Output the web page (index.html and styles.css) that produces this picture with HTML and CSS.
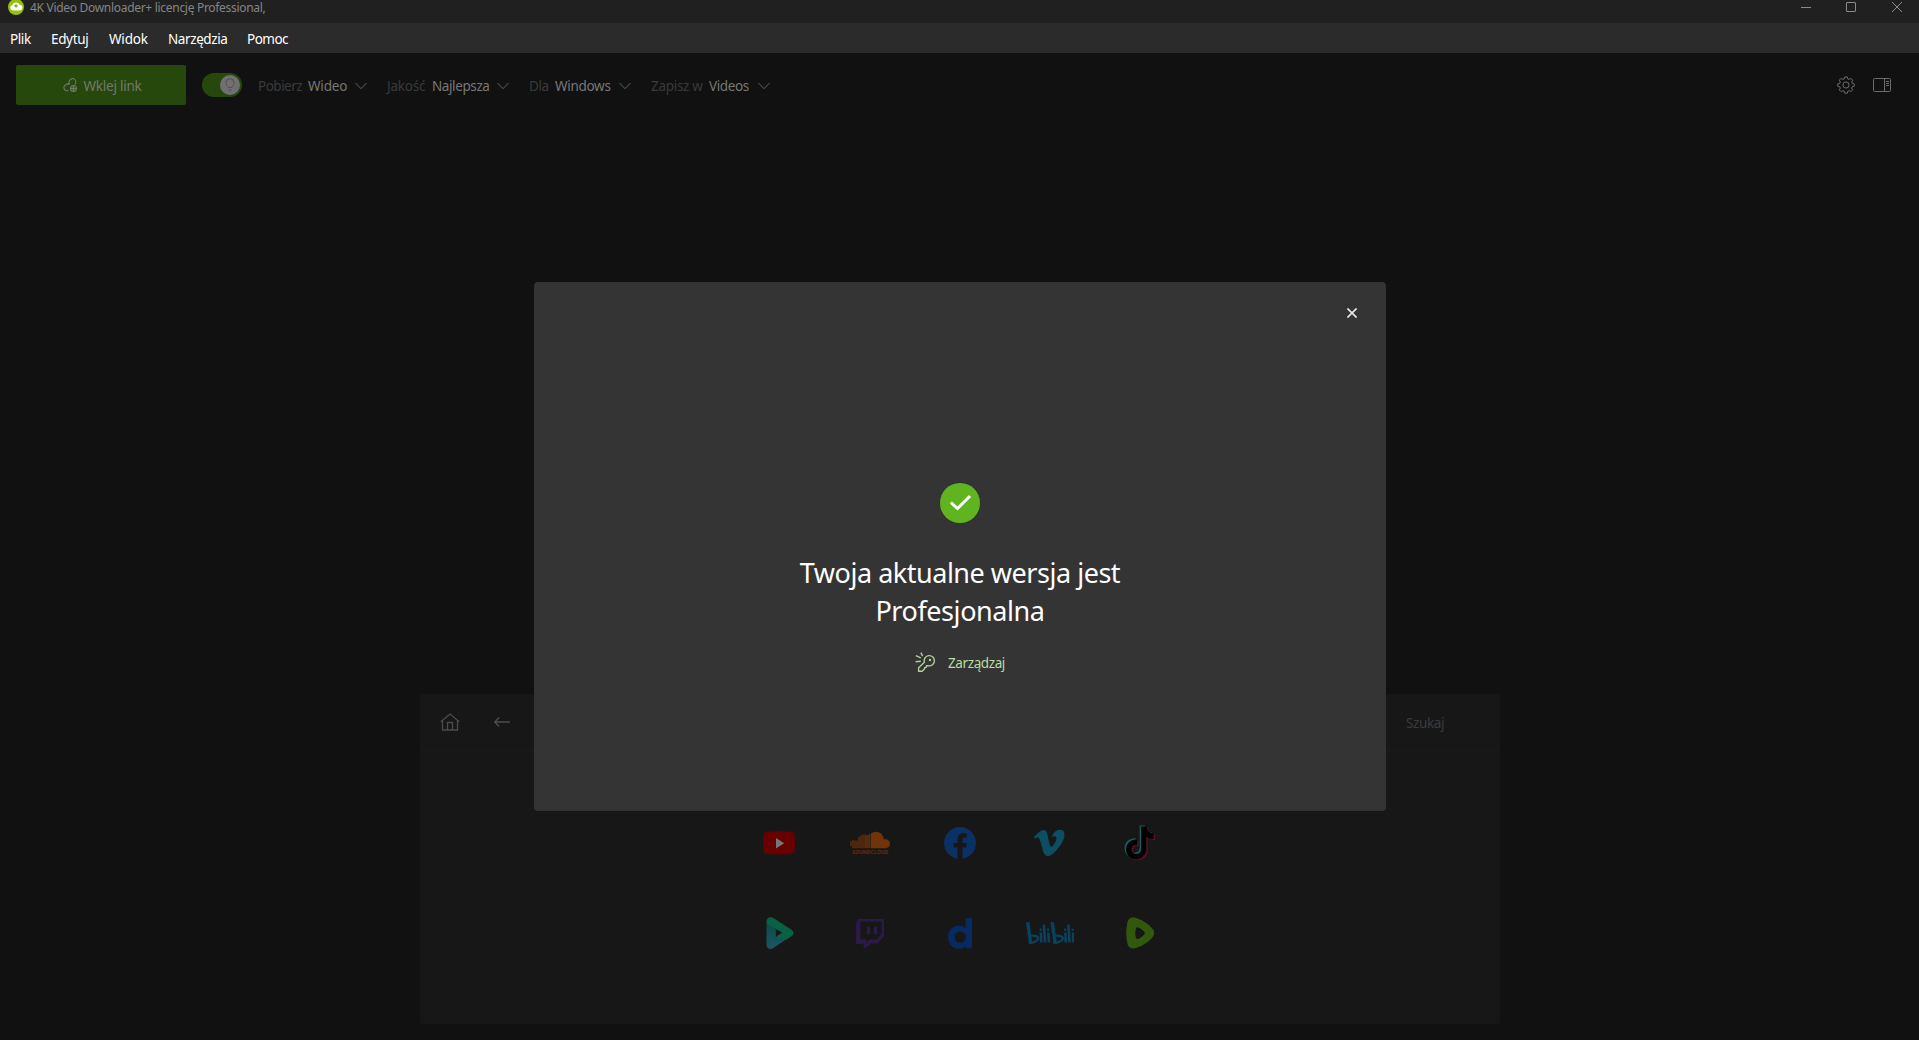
FILE: index.html
```html
<!DOCTYPE html>
<html lang="pl">
<head>
  <meta charset="UTF-8" />
  <meta name="viewport" content="width=device-width, initial-scale=1.0" />
  <title>4K Video Downloader+</title>
  <link rel="stylesheet" href="styles.css">
</head>
<body>
  <header class="titlebar">
    <svg class="app-logo" width="16" height="16" viewBox="0 0 16 16">
      <circle cx="8" cy="8" r="8" fill="#96bf0d"/>
      <path d="M4.800 11.600a2.800 2.800 0 0 1-.5-5.500 3.900 3.900 0 0 1 7.300-.3 2.900 2.900 0 0 1-.3 5.800z" fill="#fff"/>
      <path d="M8 5.200v3.400M6.300 6.900h3.400" stroke="#70a000" stroke-width="1.200"/>
    </svg>
    <span class="app-title">4K Video Downloader+ licencję Professional,</span>
    <div class="window-controls">
      <svg width="12" height="12" viewBox="0 0 12 12"><path d="M1 6.500h10"/></svg>
      <svg width="12" height="12" viewBox="0 0 12 12"><rect x="1.500" y="1.500" width="9" height="9" rx="0.500"/></svg>
      <svg width="12" height="12" viewBox="0 0 12 12"><path d="M1 1l10 10M11 1L1 11"/></svg>
    </div>
  </header>

  <nav class="menubar">
    <span class="menu-file">Plik</span>
    <span class="menu-edit">Edytuj</span>
    <span class="menu-view">Widok</span>
    <span class="menu-tools">Narzędzia</span>
    <span class="menu-help">Pomoc</span>
  </nav>

  <div class="toolbar">
    <button class="paste-btn">
      <svg width="15" height="15" viewBox="0 0 16 16" fill="none" stroke="#727a6b" stroke-width="1.100">
        <path d="M6 13.500H4a3.200 3.200 0 0 1-1.700-5.800l2-1.300a3 3 0 0 1 3.200.2"/>
        <path d="M5.400 7.600L6.800 3a3.600 3.600 0 0 1 5.900-1.400 3.600 3.600 0 0 1 .7 3.800l-.7 1.500"/>
        <circle cx="11.200" cy="11.200" r="3.200"/>
        <path d="M11.200 8.500v5.400M8.500 11.200h5.400" stroke-width="1.500"/>
      </svg>
      <span>Wklej link</span>
    </button>
    <div class="switch">
      <div class="knob">
        <svg width="12" height="14" viewBox="0 0 12 14" fill="none" stroke="#525252" stroke-width="1">
          <path d="M4.200 9.500C4 8 2 7.400 2 4.700a4 4 0 0 1 8 0C10 7.400 8 8 7.800 9.500zM4.300 12h3.400"/>
        </svg>
      </div>
    </div>
    <div class="option opt-type">
      <span class="label">Pobierz</span><span class="value">Wideo</span>
      <svg class="chevron" width="12" height="8" viewBox="0 0 12 8"><path d="M.5 1L6 6.700 11.500 1"/></svg>
    </div>
    <div class="option opt-quality">
      <span class="label">Jakość</span><span class="value">Najlepsza</span>
      <svg class="chevron" width="12" height="8" viewBox="0 0 12 8"><path d="M.5 1L6 6.700 11.500 1"/></svg>
    </div>
    <div class="option opt-system">
      <span class="label">Dla</span><span class="value">Windows</span>
      <svg class="chevron" width="12" height="8" viewBox="0 0 12 8"><path d="M.5 1L6 6.700 11.500 1"/></svg>
    </div>
    <div class="option opt-folder">
      <span class="label">Zapisz w</span><span class="value">Videos</span>
      <svg class="chevron" width="12" height="8" viewBox="0 0 12 8"><path d="M.5 1L6 6.700 11.500 1"/></svg>
    </div>
    <div class="tools">
      <svg width="18" height="18" viewBox="0 0 18 18">
        <path d="M7.700 .9h2.600l.5 2 1.300.5 1.800-1 1.800 1.800-1 1.800.5 1.300 2 .5v2.500l-2 .5-.5 1.300 1 1.800-1.800 1.800-1.800-1-1.300.5-.5 2H7.700l-.5-2-1.300-.5-1.800 1-1.800-1.800 1-1.800-.5-1.300-2-.5V7.800l2-.5.5-1.300-1-1.800 1.800-1.800 1.800 1 1.300-.5z" stroke-linejoin="round"/>
        <circle cx="9" cy="9" r="3.100"/>
      </svg>
      <svg width="18" height="14" viewBox="0 0 18 14">
        <rect x=".5" y=".5" width="17" height="13" rx="1"/>
        <path d="M11.500 .5v13M13 3.500h3M13 5.500h3M13 7.500h3"/>
      </svg>
    </div>
  </div>

  <main class="content">
    <section class="browser">
      <div class="browser-bar">
        <svg width="20" height="18" viewBox="0 0 20 18">
          <path d="M.8 8.700L10 1l9.200 7.700M2.500 7.500V17h15V7.500M7.500 17V9.500h5V17"/>
        </svg>
        <svg class="back" width="16" height="10" viewBox="0 0 16 10"><path d="M16 5H.8M5.200 .5L.7 5l4.500 4.500"/></svg>
        <span class="search">Szukaj</span>
      </div>
      <div class="sites">
        <!-- YouTube -->
        <div class="site site-youtube"><svg width="32" height="24" viewBox="0 0 32 24">
          <path d="M4 .8Q16-.1 28 .8 31.300 1 31.600 4.500q.7 7.500 0 15-.3 3.200-3.600 3.600-12 .8-24 0-3.200-.3-3.600-3.600-.7-7.500 0-15Q.8 1.200 4 .8z" fill="#690000"/>
          <path d="M13 7v10.400l8.200-5.200z" fill="#777"/>
        </svg></div>
        <!-- SoundCloud -->
        <div class="site"><svg width="40" height="24" viewBox="0 0 40 24">
          <path d="M21 17.200V2.300Q23 .7 26 .7c4 0 7.400 3 7.800 7.800 3-1 6.200 1 6.200 4.300 0 2.600-2 4.400-4.500 4.400z" fill="#713409"/>
          <path d="M1 10.500v4.500M3 9v8M5 9.500v7.700M7 9.500v7.700M9 6v11.200M11 4.500v12.700M13 3.500v13.700M15 3.600v13.600M17 4.500v12.700M19.200 3v14.200" stroke="#69300a" stroke-width="1.300"/>
          <path d="M15 4h6v13h-6z" fill="#713409" opacity=".35"/>
          <text x="2.200" y="23" class="sc-label" textLength="36" lengthAdjust="spacingAndGlyphs">SOUNDCLOUD</text>
        </svg></div>
        <!-- Facebook -->
        <div class="site"><svg width="32" height="32" viewBox="0 0 32 32">
          <circle cx="16" cy="16" r="16" fill="#0b3064"/>
          <path d="M13.500 32V20.500h-4V16h4v-3.500c0-4 2.400-6.300 6-6.300 1.800 0 3.400.3 3.400.3v3.900h-2c-2 0-2.400 1.200-2.400 2.500V16h4.300l-.7 4.500h-3.600V32z" fill="#171717"/>
        </svg></div>
        <!-- Vimeo -->
        <div class="site site-vimeo"><svg width="32" height="28" viewBox="0 0 32 28">
          <path d="M31.400 6.900c-.2 3-2.300 7.200-6.300 12.300-4.100 5.300-7.600 8-10.500 8-1.800 0-3.300-1.600-4.500-4.900L7.600 13.200C6.700 10 5.800 8.300 4.800 8.300c-.3 0-1 .5-2.500 1.500L.8 7.900l4.600-4.100C7.500 2 9 1.100 10.100 1c2.500-.2 4 1.400 4.500 5 .7 3.800 1.100 6.200 1.400 7.100.7 3.200 1.500 4.700 2.300 4.700.7 0 1.700-1 3-3.100 1.300-2 2-3.600 2.100-4.700.2-1.800-.5-2.700-2.100-2.700-.8 0-1.500.2-2.300.5C20.500 3 23.400.6 27.600.7c2.700.1 4 2.100 3.800 6.200z" fill="#0d4e62"/>
        </svg></div>
        <!-- TikTok, three shifted layers -->
        <div class="site"><svg width="32" height="36" viewBox="0 0 32 36">
          <defs><path id="note" d="M16.500 1h5.300c.6 4 3 6.700 7.200 7.200v5.300c-2.800 0-5-.8-7.200-2.300v12c0 6-4.400 10.500-10 10.500S1.500 29.500 1.500 24c0-6 4.500-10.300 11-10.100v5.500c-3.400-.4-5.600 1.600-5.600 4.400 0 2.700 2 4.600 4.700 4.600 3 0 4.900-2 4.900-5.200z"/></defs>
          <use href="#note" x="-.9" y="-.6" fill="#10605e"/>
          <use href="#note" x="2" y="1.600" fill="#660b28"/>
          <use href="#note" x=".6" y=".6" fill="#000"/>
        </svg></div>
        <!-- Play -->
        <div class="site"><svg width="28" height="32" viewBox="0 0 28 32">
          <defs><linearGradient id="teal" x1="0" y1="0" x2="0" y2="1"><stop offset="0" stop-color="#0a4a4c"/><stop offset="1" stop-color="#1c5661"/></linearGradient></defs>
          <path d="M.5 4v24c0 3.300 3.500 5 6.500 3.200L20 22.500l-6-4.500-4.200 2.500v-8.300z" fill="url(#teal)"/>
          <path d="M.5 4.500C.5.800 4-1 7.500 1l17.700 11.500c3 1.900 3 5 0 7l-5.700 3.800-9.300-3.700 6-4L2.500 8Q.5 6.500.5 4.500z" fill="#076142"/>
        </svg></div>
        <!-- Twitch -->
        <div class="site"><svg width="28" height="29" viewBox="0 0 28 29">
          <path fill-rule="evenodd" d="M2 0h26v17.500l-7 7h-6.500L10.500 28.800H7.500V25H0V5zM4.500 2.500v17.800h5.800v3.200l3.300-3.200h6.900l5-5V2.500z" fill="#2b1948"/>
          <path d="M11 7.500h3V15h-3zM18 7.500h3V15h-3z" fill="#2b1948"/>
        </svg></div>
        <!-- Dailymotion -->
        <div class="site"><svg width="24" height="32" viewBox="0 0 24 32">
          <path fill-rule="evenodd" d="M17.500 1.500L24 .2v31h-6.200v-2.300C16 31 13.700 31.800 11 31.800 4.800 31.800 0 26.500 0 20.200 0 13.500 4.800 8.500 11 8.500c2.600 0 4.800.8 6.500 2.500zM12.200 14.500c-3.200 0-5.500 2.500-5.500 5.700s2.300 5.600 5.500 5.600 5.600-2.400 5.600-5.600-2.400-5.700-5.600-5.700z" fill="#062a61"/>
        </svg></div>
        <!-- bilibili -->
        <div class="site"><svg width="48" height="24" viewBox="0 0 48 24" fill="none" stroke="#07425f">
          <g id="bili">
            <path d="M1.700 1.300L4.500 21.500" stroke-width="3.400"/>
            <path d="M4 14.800c4-.5 8 .4 8.300 2.200.3 2.400-4 4.700-8.300 5z" stroke-width="2.400"/>
            <path d="M14.800 11.500l.5 10M22.300 11.500l.6 10" stroke-width="2.500"/>
            <path d="M17.800 3.500l1.300 18" stroke-width="2.600"/>
            <path d="M14.600 7.500l.1 2.500M22 7.500l.2 2.500" stroke-width="2"/>
          </g>
          <use href="#bili" x="24.500"/>
        </svg></div>
        <!-- Rumble -->
        <div class="site"><svg width="28" height="32" viewBox="0 0 28 32">
          <path fill-rule="evenodd" d="M8 .6C14 1.500 22 6.500 26.500 11.800c2.200 2.800 2.200 5.600 0 8.400C22 25.500 15 30 8 31.400c-3.300.5-5.700-1-6.500-4.300-1.700-7-1.700-15 0-22.200C2.300 1.700 4.700.1 8 .6zM10 11.300c-1 3-1 6.500 0 9.700.4 1 1.200 1.300 2.200.9 2.400-1 4.400-2.400 6-4.300.8-1 .8-2 0-3-1.600-1.800-3.600-3.200-6-4.200-1-.4-1.800-.1-2.200.9z" fill="#32580d"/>
        </svg></div>
      </div>
    </section>
  </main>

  <div class="modal">
    <button class="close-btn">
      <svg width="10" height="10" viewBox="0 0 10 10"><path d="M.4 .4l9.200 9.200M9.600 .4L.4 9.600" stroke="#e4e4e4" stroke-width="1.700"/></svg>
    </button>
    <svg class="check" width="40" height="40" viewBox="0 0 40 40">
      <circle cx="20" cy="20" r="20" fill="#5fb41f"/>
      <path d="M12 20.500l5.500 5L29 14" fill="none" stroke="#fff" stroke-width="3" stroke-linecap="square"/>
    </svg>
    <h1><span class="line-one">Twoja aktualne wersja jest</span><br><span class="line-two">Profesjonalna</span></h1>
    <a class="manage">
      <svg width="20" height="20" viewBox="0 0 20 20" fill="none" stroke="#b0cf9b" stroke-width="1.400">
        <path d="M9.400 10.200a5.100 5.100 0 1 1 3.400 3.400l-1.200.2-.4 1.500-1.500.3-.3 1.500L7.200 19.200H3.600v-3.400z" stroke-linejoin="round"/>
        <circle cx="15" cy="8" r="1.200" fill="#b0cf9b" stroke="none"/>
        <path d="M.8 3.600l5 2.200M5.900 .6l1.700 3.500M.6 9.800l5.200-.6"/>
      </svg>
      <span>Zarządzaj</span>
    </a>
  </div>
</body>
</html>
```
FILE: styles.css
```css
* {
  box-sizing: border-box;
  margin: 0;
  padding: 0;
}

body {
  font-family: 'Segoe UI', 'Noto Sans', 'Open Sans', sans-serif;
  font-size: 13.5px;
  background: #111;
  color: #fff;
  height: 100vh;
  display: flex;
  flex-direction: column;
  position: relative;
  overflow: hidden;
  white-space: nowrap;
}

svg {
  display: block;
  flex: none;
}

button {
  border: none;
  font: inherit;
}

.titlebar {
  height: 23px;
  background: #202020;
  display: flex;
  align-items: flex-start;
  padding: 0 16px 0 8px;
}

.app-logo {
  margin-top: -1px;
}

.app-title {
  margin-left: 6px;
  font-size: 12px;
  line-height: 16px;
  letter-spacing: -0.3px;
  color: #858585;
}

.window-controls {
  margin-left: auto;
  margin-top: 1px;
  display: flex;
  gap: 33px;
}

.window-controls svg {
  fill: none;
  stroke: #8a8a8a;
}

.window-controls svg:last-child {
  margin-left: 1px;
}

.menubar {
  height: 30px;
  background: #2b2b2b;
  display: flex;
  align-items: center;
  gap: 20px;
  padding: 2px 0 0 10px;
}

.menu-file { width: 21px; letter-spacing: -0.4px; }
.menu-edit { width: 38px; letter-spacing: -0.35px; }
.menu-view { width: 39px; letter-spacing: -0.2px; }
.menu-tools { width: 59px; letter-spacing: -0.4px; }
.menu-help { width: 41px; letter-spacing: -0.5px; }

.toolbar {
  height: 64px;
  padding: 0 28px 0 16px;
  display: flex;
  align-items: center;
}

.paste-btn {
  width: 170px;
  height: 40px;
  border-radius: 2px;
  background: #26480c;
  color: #727a6b;
  display: flex;
  align-items: center;
  justify-content: center;
  gap: 6px;
  padding-left: 2px;
  letter-spacing: -0.25px;
}

.paste-btn span {
  padding-top: 2px;
}

.switch {
  width: 40px;
  height: 24px;
  margin: 0 16px;
  border-radius: 12px;
  background: #26480c;
  padding: 2px;
  display: flex;
  justify-content: flex-end;
}

.knob {
  width: 20px;
  height: 20px;
  border-radius: 50%;
  background: #707070;
  display: flex;
  align-items: center;
  justify-content: center;
}

.option {
  display: flex;
  align-items: center;
  margin-right: 20px;
  padding-top: 1px;
}

.option .label {
  color: #3a3a3a;
  margin-right: 6px;
}

.option .value {
  color: #777;
  margin-right: 8px;
}

.chevron {
  fill: none;
  stroke: #606060;
}

.opt-type .label { width: 44px; letter-spacing: -0.5px; }
.opt-type .value { width: 39px; letter-spacing: -0.2px; }
.opt-quality .label { width: 39px; letter-spacing: -0.2px; }
.opt-quality .value { width: 57px; letter-spacing: -0.4px; }
.opt-system .label { width: 20px; letter-spacing: -0.4px; }
.opt-system .value { width: 56px; letter-spacing: -0.3px; }
.opt-folder .label { width: 52px; letter-spacing: -0.3px; }
.opt-folder .value { width: 41px; letter-spacing: -0.4px; }

.tools {
  margin-left: auto;
  display: flex;
  align-items: center;
  gap: 18.5px;
}

.tools svg {
  fill: none;
  stroke: #6c6c6c;
}

.content {
  flex: 1;
  display: flex;
  justify-content: center;
  align-items: flex-end;
  padding: 0 0 16px 1px;
}

.browser {
  width: 1080px;
  height: 330px;
  background: #171717;
  border-radius: 2px;
}

.browser-bar {
  height: 57px;
  border-bottom: 1px solid #1a1a1a;
  display: flex;
  align-items: center;
  padding: 0 56px 0 20px;
}

.browser-bar svg {
  fill: none;
  stroke: #4c4c4c;
  stroke-width: 1.3;
}

.browser-bar .back {
  margin-left: 34px;
}

.search {
  margin-left: auto;
  padding-top: 2px;
  color: #3b3b3b;
  width: 38px;
  letter-spacing: -0.4px;
}

.sites {
  display: grid;
  grid-template-columns: repeat(5, 90px);
  grid-auto-rows: 90px;
  justify-content: center;
  padding-top: 47px;
}

.site {
  display: flex;
  align-items: center;
  justify-content: center;
}

.site-youtube,
.site-vimeo {
  padding-right: 2px;
}

.sc-label {
  font-family: 'Open Sans', sans-serif;
  font-size: 5px;
  font-weight: 700;
  fill: #63300d;
}

.modal {
  position: absolute;
  left: 534px;
  top: 282px;
  width: 852px;
  height: 529px;
  border-radius: 4px;
  background: #343434;
  display: flex;
  flex-direction: column;
  align-items: center;
}

.close-btn {
  align-self: flex-end;
  margin: 18.5px 22px 0 0;
  padding: 7px;
  background: none;
}

.check {
  margin-top: 158px;
}

h1 {
  margin-top: 31.5px;
  font-size: 27px;
  font-weight: 400;
  line-height: 38px;
  text-align: center;
}

.line-one { letter-spacing: -0.48px; }
.line-two { letter-spacing: -0.42px; }

.manage {
  margin-top: 21px;
  display: flex;
  align-items: center;
  gap: 13px;
  color: #b9dda0;
  letter-spacing: -0.4px;
}

.manage span {
  padding-top: 3px;
}
```
